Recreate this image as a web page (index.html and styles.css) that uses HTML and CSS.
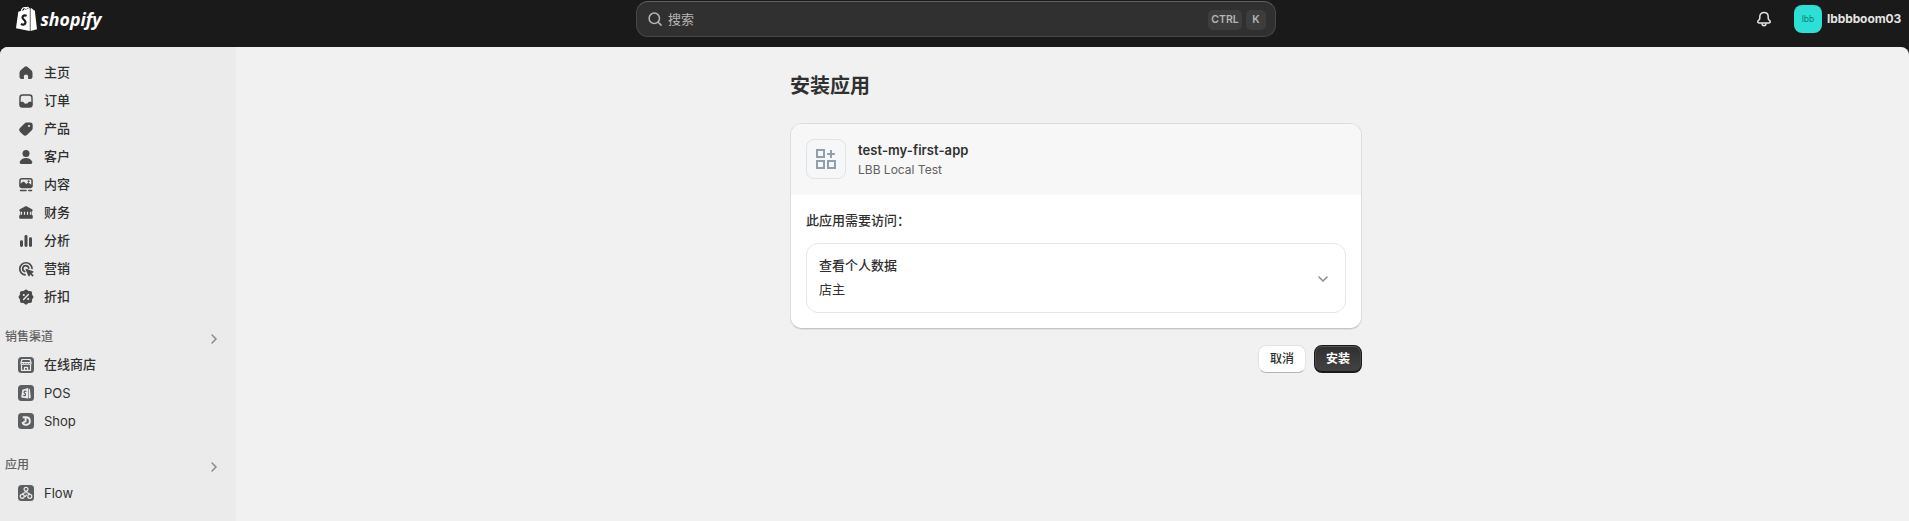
FILE: index.html
```html
<!DOCTYPE html>
<html lang="zh-CN">
<head>
<meta charset="utf-8">
<title>安装应用</title>
<link rel="stylesheet" href="styles.css">
</head>
<body>
<header class="topbar">
  <svg class="logo" viewBox="0 0 90 32" width="90" height="32">
    <path d="M2.300 11.800 13.800 8.600V31L0 28.300Z" fill="#fff"/>
    <path d="M14.500 8.400 15.700 8.200 17.700 10.200 18.800 10.500 21 29.300 14.500 31Z" fill="#fff"/>
    <path d="M5.200 11.500C5.700 8.500 7.500 7.200 9.300 7.600 11 8 11.500 9 11.500 10.500M8.300 10.500C9 7.500 12 5.800 13.400 9.200" fill="none" stroke="#fff" stroke-width="1.100"/>
    <path d="M10.600 15.900C8.500 14.800 6.400 15.700 6.500 17.500 6.600 19.500 9.700 20.200 9.500 22.400 9.400 24.600 6.900 25.200 5 23.800" fill="none" stroke="#1a1a1a" stroke-width="2.200"/>
    <text class="logo-text" x="24.500" y="25.500" textLength="61" lengthAdjust="spacingAndGlyphs">shopify</text>
  </svg>
  <div class="search">
    <svg viewBox="0 0 20 20" width="20" height="20" class="line"><circle cx="9.300" cy="9.300" r="5.200"/><path d="m13.200 13.200 2.900 2.900"/></svg>
    <span class="search-label">搜索</span>
    <kbd class="ctrl">CTRL</kbd><kbd>K</kbd>
  </div>
  <div class="account">
    <svg class="bell" viewBox="0 0 20 20" width="20" height="20"><path d="M10 3.500c-2.600 0-4.200 1.900-4.200 4.200v1.500c0 .7-.4 1.300-.9 1.800l-.9 1c-.7.8-.2 2 .9 2h10.200c1.100 0 1.600-1.200.9-2l-.9-1c-.5-.5-.9-1.100-.9-1.800V7.700c0-2.300-1.600-4.200-4.200-4.200Z"/><path d="M8 14.200c0 1.500.9 2.500 2 2.500s2-1 2-2.500"/></svg>
    <span class="avatar">lbb</span>
    <span class="user">lbbbboom03</span>
  </div>
</header>
<div class="frame">
  <nav class="sidebar">
    <a class="item"><svg viewBox="0 0 20 20"><path d="M8.700 3.800a2 2 0 0 1 2.600 0l3.800 3.300c.9.800 1.400 1.900 1.400 3.100v3.500c0 1.300-.9 2.300-2.200 2.300h-2.200v-2.700c0-.8-.6-1.500-1.500-1.500h-1.200c-.9 0-1.500.7-1.500 1.500V16H5.700c-1.300 0-2.200-1-2.200-2.300v-3.500c0-1.200.5-2.300 1.400-3.100Z"/></svg><span>主页</span></a>
    <a class="item"><svg viewBox="0 0 20 20"><path fill-rule="evenodd" d="M6.500 3.300h7A3.200 3.200 0 0 1 16.700 6.500l.1 7a3.200 3.200 0 0 1-3.200 3.200H6.400a3.200 3.200 0 0 1-3.200-3.200l.1-7a3.200 3.200 0 0 1 3.200-3.200Zm.2 1.500c-1 0-1.800.7-1.900 1.700l-.2 4.200h2.100c.6 0 .9.300 1.200.8.400.8 1.100 1.200 2.100 1.200s1.700-.4 2.100-1.200c.3-.5.600-.8 1.200-.8h2.100l-.2-4.200c-.1-1-.9-1.700-1.900-1.700Z"/></svg><span>订单</span></a>
    <a class="item"><svg viewBox="0 0 20 20"><path fill-rule="evenodd" d="M10.700 3.400h3.600a2.400 2.400 0 0 1 2.400 2.400v3.300c0 .8-.3 1.500-.9 2.100l-4.600 4.600a2.900 2.900 0 0 1-4.100 0l-2.900-2.900a2.900 2.900 0 0 1 0-4.100l4.300-4.400c.6-.6 1.300-1 2.200-1ZM13 8.100a1.100 1.100 0 1 0 0-2.200 1.100 1.100 0 0 0 0 2.200Z"/></svg><span>产品</span></a>
    <a class="item"><svg viewBox="0 0 20 20"><circle cx="10" cy="6.400" r="3.500"/><path d="M3.800 14.800C4.700 12.400 7 11 10 11s5.300 1.400 6.200 3.800c.4 1.100-.2 2.200-1.500 2.200H5.300c-1.300 0-1.900-1.100-1.500-2.200Z"/></svg><span>客户</span></a>
    <a class="item"><svg viewBox="0 0 20 20"><path fill-rule="evenodd" d="M5.900 3h8.200A2.700 2.700 0 0 1 16.800 5.700v4.800a2.700 2.700 0 0 1-2.700 2.700H5.900a2.700 2.700 0 0 1-2.700-2.700V5.700A2.700 2.700 0 0 1 5.900 3Zm.1 1.500c-.8 0-1.300.5-1.300 1.300v3l1.600-1.500c.7-.6 1.600-.6 2.300 0l1.700 1.700 1-.8c.6-.5 1.400-.5 2 0l2 1.600v-4c0-.8-.5-1.300-1.300-1.300Zm6.600 2.900a1.100 1.100 0 1 0 0-2.200 1.100 1.100 0 0 0 0 2.200Z"/><path d="M4.500 14.700H10a.7.700 0 0 1 0 1.500H4.500a.7.700 0 0 1 0-1.500ZM12.800 14.700h2.700a.7.700 0 0 1 0 1.500h-2.700a.7.700 0 0 1 0-1.500Z"/></svg><span>内容</span></a>
    <a class="item"><svg viewBox="0 0 20 20"><path d="M9 3.500c.6-.4 1.400-.4 2 0l5 2.700c1 .5.900 2.100-.3 2.300v3.300c.6.200 1.100.8 1.100 1.500v1.200c0 .8-.5 1.300-1.200 1.300H4.400c-.7 0-1.200-.5-1.200-1.300v-1.200c0-.7.500-1.300 1.100-1.500V8.500C3.100 8.300 3 6.700 4 6.200Z"/><path d="M5.500 8.700v3M8.500 8.700v3M11.500 8.700v3M14.500 8.700v3" stroke="#ebebeb" stroke-width="1.200"/></svg><span>财务</span></a>
    <a class="item"><svg viewBox="0 0 20 20"><rect x="4" y="9.300" width="3" height="6.700" rx="1.400"/><rect x="8.500" y="4" width="3" height="12" rx="1.400"/><rect x="13" y="6.300" width="3" height="9.700" rx="1.400"/></svg><span>分析</span></a>
    <a class="item"><svg viewBox="0 0 20 20"><g fill="none" stroke="#4a4a4a" stroke-width="1.700" stroke-linecap="round"><path d="M16 9.500A6.100 6.100 0 1 0 9 15.900"/><path d="M12.700 9.200a3 3 0 1 0-4 3.300"/></g><path d="m10.200 9.800 6.900 2.500c.6.200.6.900.1 1.200l-1.600.8 1.700 1.700c.7.700-.5 1.900-1.200 1.200L14.400 15.500l-.8 1.600c-.3.500-1 .5-1.200-.1L9.500 10.500c-.2-.5.200-.9.700-.7Z"/></svg><span>营销</span></a>
    <a class="item"><svg viewBox="0 0 20 20"><path d="M8.500 3.300Q10 1.500 11.500 3.300L12.500 4 14 3.900Q16.100 3.900 16.100 6L16 7.500 16.700 8.500Q18.500 10 16.700 11.500L16 12.500 16.100 14Q16.100 16.100 14 16.100L12.500 16 11.500 16.700Q10 18.500 8.500 16.700L7.500 16 6 16.100Q3.900 16.100 3.900 14L4 12.500 3.300 11.500Q1.500 10 3.300 8.500L4 7.500 3.900 6Q3.900 3.900 6 3.900L7.500 4Z"/><path d="m7.600 12.400 4.800-4.800" stroke="#ebebeb" stroke-width="1.400" stroke-linecap="round"/><circle cx="7.800" cy="8" r="1.050" fill="#ebebeb"/><circle cx="12.200" cy="12" r="1.050" fill="#ebebeb"/></svg><span>折扣</span></a>

    <div class="group"><span>销售渠道</span><svg class="chev" viewBox="0 0 8 12"><path d="m2 2 4 4-4 4"/></svg></div>
    <a class="item"><svg viewBox="0 0 20 20"><rect class="tile" x="2" y="2" width="16" height="16" rx="3.500"/><g class="glyph"><path d="M5.900 4.500h8.200l1 3.600v.4c0 1.200-2.400 1.200-2.500 0-.1 1.200-2.500 1.200-2.600 0-.1 1.200-2.500 1.200-2.600 0-.1 1.200-2.500 1.200-2.500 0v-.4ZM5 7.500h10M5.500 10v5.300h9V10M8.500 15.300v-3h3v3"/></g></svg><span>在线商店</span></a>
    <a class="item latin"><svg viewBox="0 0 20 20"><rect class="tile" x="2" y="2" width="16" height="16" rx="3.500"/><path d="m6.300 6.700 5.700-1.800v10.700l-6.800-1.200ZM12.600 5.300l1.300 1 .9 8.400-2.200.8Z" fill="#ebebeb"/><path d="M10.400 8.500c-1.300-.7-2.500 0-2.300 1 .2 1 1.600 1.100 1.500 2.200-.1 1-1.400 1.200-2.300.4" fill="none" stroke="#5c5f62" stroke-width="1.200"/></svg><span>POS</span></a>
    <a class="item latin"><svg viewBox="0 0 20 20"><rect class="tile" x="2" y="2" width="16" height="16" rx="3.500"/><path d="M6.700 6.200h3.400a3.800 3.800 0 1 1-3.700 4.800M9.600 7v3.700M7.300 10.400c.7.500 1.500.6 2.300.3" fill="none" stroke="#ebebeb" stroke-width="1.900"/></svg><span>Shop</span></a>

    <div class="group apps"><span>应用</span><svg class="chev" viewBox="0 0 8 12"><path d="m2 2 4 4-4 4"/></svg></div>
    <a class="item latin"><svg viewBox="0 0 20 20"><rect class="tile" x="2" y="2" width="16" height="16" rx="3.500"/><g class="glyph"><circle cx="10" cy="6.200" r="1.900"/><circle cx="6.200" cy="13.300" r="2"/><circle cx="13.800" cy="13.300" r="2"/><path d="M9.400 8.100c.2 1.200-.4 1.900-1.500 2.100-1 .2-1.600.6-1.700 1.500M10.600 8.100c-.2 1.200.4 1.900 1.500 2.100 1 .2 1.600.6 1.700 1.500M8.200 13.300h1.200l1.200-1.700"/></g></svg><span>Flow</span></a>
  </nav>
  <main class="main">
    <div class="page">
      <h1>安装应用</h1>
      <section class="card">
        <div class="card-head">
          <span class="app-icon"><svg viewBox="0 0 20 20" width="20" height="20"><path d="M1 1h7v7H1ZM1 12h7v7H1ZM12 12h7v7h-7ZM15 1v8M11.200 5h7.600"/></svg></span>
          <div class="app-info"><div class="app-name">test-my-first-app</div><div class="app-dev">LBB Local Test</div></div>
        </div>
        <div class="card-body">
          <h2>此应用需要访问：</h2>
          <div class="scope">
            <div><div class="scope-title">查看个人数据</div><div class="scope-text">店主</div></div>
            <svg viewBox="0 0 12 8" width="12" height="8"><path d="m2 2 4 4 4-4"/></svg>
          </div>
        </div>
      </section>
      <div class="actions"><button class="btn">取消</button><button class="btn primary">安装</button></div>
    </div>
  </main>
</div>
</body>
</html>
```
FILE: styles.css
```css
* { box-sizing: border-box; }
body { margin: 0; height: 521px; overflow: hidden; display: flex; flex-direction: column; background: #1a1a1a; color: #303030; font: 500 13px/20px Inter, "Noto Sans CJK SC", sans-serif; }
.topbar { height: 47px; flex: none; display: grid; grid-template-columns: 1fr 640px 1fr; align-items: start; padding-left: 3px; }
.logo { margin-left: 13px; overflow: visible; }
.logo-text { font: italic 700 17.5px "Open Sans", sans-serif; fill: #fff; }
.search { height: 36px; margin-top: 1px; padding: 0 9px 0 7px; display: flex; align-items: center; gap: 4px; border: 1px solid #474747; border-top-color: #616161; border-radius: 12px; background: #303030; color: #b5b5b5; }
.search .line { fill: none; stroke: #b5b5b5; stroke-width: 1.5; stroke-linecap: round; margin-left: 1px; }
.search-label { flex: 1; font-weight: 400; margin: 0 0 1px -1px; }
kbd { width: 20px; height: 20px; margin-top: 2px; text-align: center; border-radius: 5px; background: #3d3d3d; color: #b5b5b5; font: 600 10.5px/20px Inter, sans-serif; }
.ctrl { width: 34px; }
.account { display: flex; align-items: center; justify-content: flex-end; height: 28px; margin-top: 5px; padding-right: 8px; }
.bell { fill: none; stroke: #e3e3e3; stroke-width: 1.5; margin-right: 20px; }
.avatar { width: 28px; height: 28px; border-radius: 8px; background: #2ce0d5; color: #0c7f79; font-size: 8.5px; font-weight: 400; line-height: 28px; text-align: center; margin-right: 5px; }
.user { width: 74px; color: #e3e3e3; font-weight: 650; font-size: 12px; white-space: nowrap; letter-spacing: -.08px; }
.frame { flex: 1; display: flex; border-radius: 8px 8px 0 0; overflow: hidden; background: #f1f1f1; }
.sidebar { width: 236px; flex: none; padding-top: 12px; background: #ebebeb; }
.item { display: flex; align-items: center; height: 28px; padding-left: 16px; gap: 8px; color: #303030; }
.item > span { margin-bottom: 2px; }
.item.latin > span { margin-bottom: 0; font-weight: 400; }
.item > svg { width: 20px; height: 20px; fill: #4a4a4a; }
.item .tile { fill: #5c5f62; }
.glyph { fill: none; stroke: #ebebeb; stroke-width: 1.2; stroke-linejoin: round; }
.group { display: flex; align-items: center; justify-content: space-between; height: 24px; margin: 13px 18px 3px 5px; font-size: 12px; color: #616161; }
.group.apps { margin-top: 18px; margin-bottom: 2px; }
.group span { margin-top: 1px; }
.group.apps span { margin-top: 0; }
.chev { width: 8px; height: 12px; margin-top: 5px; fill: none; stroke: #8a8a8a; stroke-width: 1.5; stroke-linecap: round; }
.apps .chev { margin-top: 3px; }
.main { flex: 1; display: flex; justify-content: center; padding-left: 7px; }
.page { width: 572px; padding-top: 27px; }
h1 { margin: 0 0 25px; font-size: 20px; line-height: 24px; font-weight: 700; }
.card { height: 206px; border-radius: 12px; background: #fff; overflow: hidden; border: 1px solid #dcdcdc; border-bottom-color: #c4c4c4; box-shadow: 0 1px 0 #e0e0e0; }
.card-head { display: flex; align-items: center; gap: 12px; height: 71px; padding: 0 15px 1px; background: #f7f7f7; }
.app-icon { width: 40px; height: 40px; display: grid; place-items: center; border: 1px solid #e3e3e3; border-radius: 8px; background: #f6f7f8; }
.app-icon svg { fill: none; stroke: #919eab; stroke-width: 2; }
.app-info { padding-top: 2px; }
.app-name { font-weight: 600; letter-spacing: .07px; }
.app-dev { font-weight: 400; font-size: 12px; color: #616161; }
.card-body { padding: 15px 15px 0; }
h2 { margin: 0 0 13px; font-size: 13px; line-height: 20px; font-weight: 500; }
.scope { height: 70px; display: flex; align-items: center; justify-content: space-between; padding: 0 16px 2px 12px; border: 1px solid #e6e6e6; border-radius: 12px; }
.scope-title { font-weight: 500; margin-bottom: 4px; }
.scope-text { font-weight: 400; }
.scope svg { margin-top: 4px; fill: none; stroke: #8a8a8a; stroke-width: 1.5; stroke-linecap: round; }
.actions { display: flex; justify-content: flex-end; gap: 8px; margin-top: 16px; }
.btn { width: 48px; height: 28px; padding: 0; border: 1px solid #e3e3e3; border-bottom-color: #b5b5b5; border-radius: 8px; background: #fff; color: #303030; font: 500 12px/16px Inter, "Noto Sans CJK SC", sans-serif; }
.primary { color: #fff; border: 1px solid #1a1a1a; background: linear-gradient(#303030, #424242); box-shadow: inset 0 1px 0 #555, inset 1px 0 0 #4a4a4a, inset -1px 0 0 #4a4a4a; border-bottom-width: 2px; font-weight: 700; }
```
